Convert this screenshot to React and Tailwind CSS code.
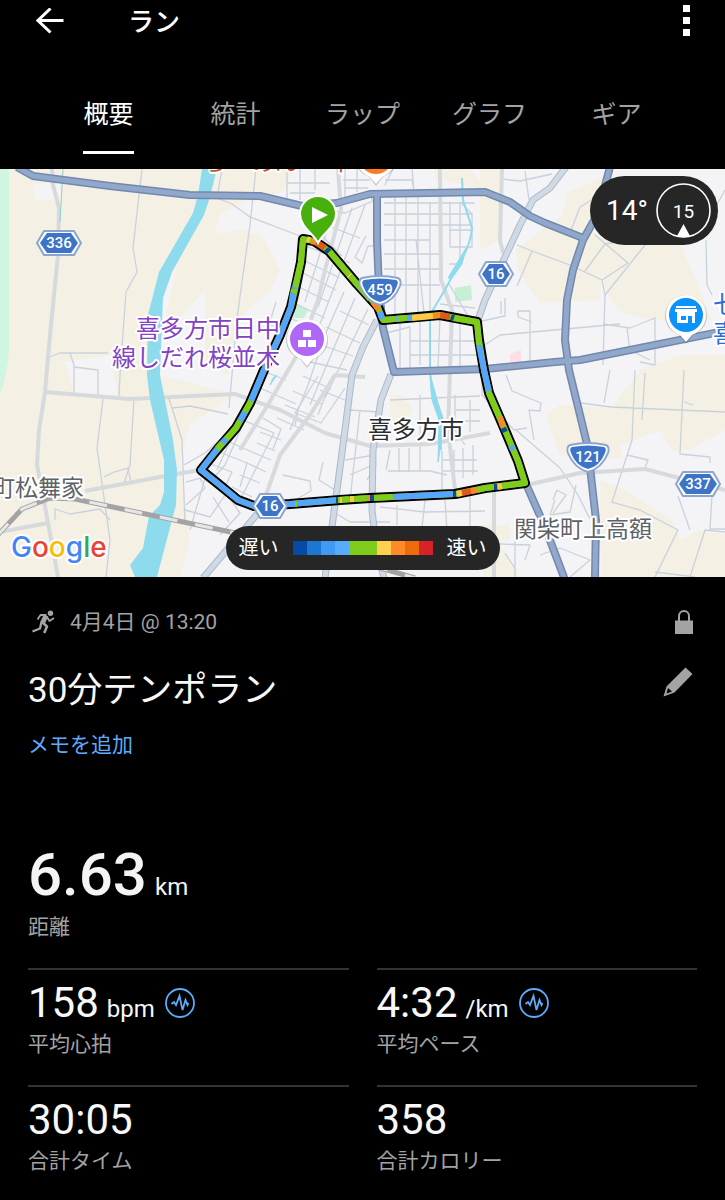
import React, { useState } from 'react';

const TABS = ['概要', '統計', 'ラップ', 'グラフ', 'ギア'];

const STATS = [
  { label: '平均心拍', value: '158', unit: 'bpm', chart: true },
  { label: '平均ペース', value: '4:32', unit: '/km', chart: true },
  { label: '合計タイム', value: '30:05' },
  { label: '合計カロリー', value: '358' },
];

const PACE_COLORS = [
  'bg-[#064ba3]', 'bg-[#1b76d4]', 'bg-[#4199f2]', 'bg-[#58acff]', 'bg-[#80cc1d]',
  'bg-[#80cc1d]', 'bg-[#ffd04f]', 'bg-[#ff8a27]', 'bg-[#ee6a0a]', 'bg-[#d92226]',
];

const GREEN = '#80cc1d';
const BLUE = '#55a6fb';
const NAVY = '#0b4c94';
const YELLOW = '#fcc84a';
const ORANGE = '#f58a2c';
const RED = '#e2571a';

const ROUTE =
  'M303 239 L301 262 L295 290 L291 307 L280 335 L264 370 L250 403 L236 428 L217 450 L201 470 L216 482 L238 500 L254 506 L290 504 L340 500 L370 498 L455 494 L485 488 L525 483 L518 461 L502 423 L489 393 L484 370 L479 340 L477 322 L440 315 L383 320 L378 307 L357 284 L329 251 L314 241 Z';

const ROUTE_SEGMENTS = [
  [GREEN, 'M303 239 L301 262 L295 287'],
  [BLUE, 'M295 287 L294 289'],
  [GREEN, 'M294 289 L293 293'],
  [BLUE, 'M293 293 L291 307 L280 335 L264 370 L251 401'],
  [GREEN, 'M251 401 L245 412'],
  [BLUE, 'M245 412 L240 421'],
  [GREEN, 'M240 421 L236 428 L226 439'],
  [BLUE, 'M226 439 L222 443'],
  [GREEN, 'M222 443 L217 449'],
  [BLUE, 'M217 449 L201 470 L216 482 L238 500 L254 506 L290 504 L338 500'],
  [GREEN, 'M295 504 L297 504'],
  [NAVY, 'M336 500 L338 500'],
  [GREEN, 'M338 500 L349 499'],
  [YELLOW, 'M340 500 L342 500 M350 499 L354 499'],
  [GREEN, 'M354 499 L368 498'],
  [ORANGE, 'M367 498 L370 498'],
  [NAVY, 'M370 498 L374 498'],
  [GREEN, 'M374 498 L393 497'],
  [BLUE, 'M393 497 L453 494'],
  [NAVY, 'M453 494 L456 494'],
  [YELLOW, 'M457 494 L462 493'],
  [RED, 'M462 493 L471 491'],
  [ORANGE, 'M471 491 L477 490'],
  [GREEN, 'M477 490 L485 488 L525 483 L518 461 L502 423 L489 393'],
  [NAVY, 'M494 487 L497 487'],
  [YELLOW, 'M498 487 L502 486'],
  [BLUE, 'M513 450 L511 446'],
  [NAVY, 'M505 432 L503 428'],
  [ORANGE, 'M503 427 L500 417'],
  [BLUE, 'M489 391 L484 370 L479 345'],
  [GREEN, 'M479 345 L477 322 L453 318'],
  [NAVY, 'M454 318 L451 317'],
  [RED, 'M450 317 L440 315'],
  [ORANGE, 'M440 315 L433 316'],
  [YELLOW, 'M433 316 L412 318'],
  [BLUE, 'M412 318 L407 318'],
  [GREEN, 'M406 318 L383 320'],
  [BLUE, 'M396 319 L397 319 M382 319 L380 312'],
  [ORANGE, 'M379 310 L373 302'],
  [GREEN, 'M370 299 L357 284 L330 252'],
  [YELLOW, 'M350 276 L349 275'],
  [NAVY, 'M329 252 L326 249'],
  [RED, 'M325 248 L316 242'],
  [ORANGE, 'M316 242 L311 241'],
  [YELLOW, 'M310 240 L307 239'],
];

const FIELDS = [
  'M9 169 H202 L193 230 L160 300 L155 375 L175 480 L176 577 H0 V395 L9 355 Z',
  'M201 169 H292 L285 190 L245 205 L219 227 L218 220 L205 290 L160 340 V375 L235 395 L190 425 L180 460 L190 540 L180 577 H150 L176 490 L150 380 Z',
  'M205 235 L240 230 L262 235 L280 270 L270 290 L240 318 L228 375 L205 360 Z',
  'M434 169 L435 178 L485 190 L470 169 Z',
  'M480 169 H500 V240 L480 250 Z',
  'M516 250 L562 215 L568 192 L612 174 L592 230 L612 250 L602 275 L600 300 L540 303 L518 270 Z',
  'M600 238 L680 244 L700 290 L712 320 H650 L618 310 L605 290 Z',
  'M546 415 L560 405 L612 408 L640 370 L682 355 H725 V430 L690 450 L600 460 L560 455 Z',
  'M600 480 L665 505 L680 540 L700 530 L725 535 V577 H601 Z',
  'M483 545 H500 L520 577 H483 Z M475 525 H510 V540 H480 Z',
  'M390 395 H402 L413 410 L400 428 L390 420 Z',
];

const TOWNS = [
  'M33 185 L62 180 L58 199 L36 200 Z',
  'M65 362 L110 355 L118 395 L75 394 Z',
  'M220 214 L250 200 V228 L218 226 Z',
  'M702 237 L715 245 L718 285 L700 290 L695 270 Z',
  'M620 445 L660 430 L705 505 L680 525 L625 490 Z',
];

const GREY_ROADS = [
  'M52 169 L53 185 L59 208 L58 255 L50 335 L45 392 L39 430 L37 465 L42 490 L58 577',
  'M45 392 L130 399 L235 394 L280 410 L325 433 L370 446 L430 444 L490 433',
  'M85 491 L160 477 L200 470',
  'M0 532 L48 523',
  'M338 169 L341 210 L325 270 L318 300 L300 350 L266 408 L240 450',
  'M440 169 L441 280 L452 310 L450 370 L448 430 L455 490',
  'M365 377 L335 375 L310 415 L280 455 L266 495',
  'M527 485 L580 473 L645 469 L725 490',
  'M502 169 L500 240 L503 253',
  'M494 490 L494 577',
];

const STREETS = [
  // west of the river
  'M142 169 L133 248 L137 272 L126 292 L120 375 L119 396',
  'M47 358 L60 353 L108 353 M70 353 L74 365 V395 M74 367 L98 370 V395',
  'M103 399 L97 448 L110 540 L106 577 M134 399 L130 465 L124 483',
  'M104 477 L114 472 L128 468 L131 483 M55 520 V509 L70 514 L100 509 L110 520',
  'M222 169 L217 198 L232 204 L250 217 L300 236 M256 169 L250 225 L237 318 L229 408',
  'M168 396 L172 408 L182 440 L185 525 M172 408 L190 406 L228 414',
  'M184 465 L205 453 L225 435 L250 402 M186 482 L200 478 L205 488 L186 505 M185 510 L210 517 L225 495',
  // northern blocks
  'M287 169 V204 M300 169 V200 M315 169 V190 M287 183 H330 M290 193 H315 M345 169 V197 M357 169 V192',
  'M343 180 H370 M345 188 H368 M385 180 H412 L415 196 M393 169 L385 185 M412 169 L414 192',
  'M302 205 L345 213 L373 201 L368 192 M310 219 L360 238 M318 232 L342 256 M303 245 L350 263 M303 260 L340 278',
  'M301 272 L336 290 M297 286 L329 302 M292 302 L325 318 M288 317 L320 332',
  'M365 205 L335 285 L310 350 M352 208 L318 307 M335 205 L305 302 M366 236 L355 257 L362 263 L368 246 H377',
  // centre
  'M344 292 L325 335 L308 385 L290 430 M355 298 L333 350 L310 405 M368 309 L348 350 L325 398',
  'M326 327 L360 343 M318 344 L353 356 M310 362 L347 370 M303 376 L331 389 M293 391 L322 404',
  'M285 405 L315 417 M277 418 L304 430 M340 311 L369 325',
  'M384 203 H475 M384 214 H473 M384 225 H471 M384 240 H430 M384 254 H439 M384 269 H441 M385 285 H440',
  'M395 196 V316 M406 196 V316 M418 196 V316 M430 202 V315 M416 239 L424 313 M440 304 L475 308',
  'M450 202 V247 H472 V214 L460 202 M460 202 V264 M449 230 H473 M449 264 H462 M449 284 L470 319',
  'M386 333 L410 327 V370 M400 322 V370 M420 320 V365 M440 318 L438 368 M460 320 V370 M410 341 H475 M410 355 H478',
  // western town
  'M276 302 L269 325 L279 326 L271 348 M261 326 L283 337 M268 373 L286 380 M260 388 L296 404',
  'M245 421 L274 433 L240 500 M263 418 L281 429 L273 449 M260 432 L281 440 M257 443 L275 451 M252 452 L271 460',
  'M247 463 L266 472 M240 475 L260 483 M232 487 L252 497 M217 451 L247 463 L240 487 M225 440 L252 452 M208 463 L232 472 L225 487',
  'M240 431 L225 465 L210 482 M230 441 L217 470 M206 475 L190 530 M220 485 L240 513 L220 535 M213 497 L229 522',
  'M318 376 L295 413 L321 423 L345 388 M333 375 L318 415 M320 390 L345 400 M298 412 L295 425',
  'M283 475 L310 481 L311 491 L295 500 M323 462 L319 480 L335 490 M360 410 L350 500 M350 410 L380 412 M370 420 L376 465 L367 480',
  'M345 460 L375 455 M350 475 L373 465 M390 400 L480 396 M420 395 V470 M455 395 V430 L465 445 M470 400 V432 M456 410 H480 M457 421 H480',
  'M388 471 H430 L447 475 M390 450 L386 470 M399 448 V472 M409 448 V472 M442 451 V495 M454 450 V480 M463 448 V478 M473 445 V475 M443 460 H477 M443 471 H478',
  'M380 507 L425 512 L485 511 M397 505 V525 M425 500 L422 528 M445 500 L447 530 M470 495 V530 M330 510 L350 522 H390',
  // east
  'M501 179 L520 181 L552 174 M525 171 L529 200 M517 245 L532 251 L517 286 M532 251 L570 265 L602 280 L605 295 L603 365',
  'M602 280 L628 263 L595 235 M605 295 L645 245 M585 271 L605 244 L630 240 M570 233 L580 207 L595 198',
  'M482 321 L505 316 V298 M501 301 V314 M518 317 V311 H530 V368 M518 317 L532 322 M483 346 L500 335 L620 324 M603 324 L630 328 L655 318 V365 L640 362',
  'M627 328 L630 350 L650 360 M645 373 L642 420 M482 370 V395 L514 430 L527 428 M506 375 L512 391 L541 403 L540 411 L529 410 L534 440',
  'M581 403 L611 407 L725 412 M610 370 L604 403 M635 370 L632 440 L612 502 L640 510 L678 530 L655 577',
  'M684 370 L680 454 L710 457 V463 M684 402 L693 405 M627 455 L648 460 L645 468 M678 496 L690 530 M712 495 L710 529 H725',
  'M516 430 L560 468 L578 495 L590 519 M553 500 L557 490 L566 495 L553 513 M576 485 L570 512 L550 515 L555 500',
  'M706 240 L707 285 L712 295 M700 220 L714 210 L725 190 M725 532 L705 530 L690 577 M655 572 L695 577',
  'M505 553 L516 570 M500 544 L530 545 L525 560 M540 555 L560 548 L590 560 L570 577 M515 535 V577',
];

const MAJOR_ROADS = [
  'M17 167 L33 176 L110 186 L190 195 L260 196 L302 206 L337 203 L370 194 L485 192 L510 202 L530 216 L545 223 L583 238',
  'M377 194 V240 L379 290 L383 328 L394 372 L485 369 L555 362 L580 360 L640 348 L725 331',
  'M610 167 L597 215 L583 240 L573 270 L567 300 L565 340 L569 370 L580 415 L588 448 L592 485 L596 520 L595 578',
  'M526 484 L545 527 L565 580',
];

const SECONDARY_ROADS = [
  'M566 167 L550 188 L533 200 L520 225 L485 300 L478 320',
  'M377 320 L363 347 L352 375 L345 430 L337 490 L325 578',
  'M391 374 L381 400 L373 450 L372 510 L376 545 L384 578',
  'M264 506 L203 578',
];

const RAIL = 'M-4 537 L22 509 L50 498 L75 499 L240 534 L310 548 L415 578';

function RoadHex({ x, y, label }) {
  const w = label.length > 2 ? 22 : 17;
  const hex = (dx, h) =>
    `M${x - w - dx} ${y} L${x - w + 7 - dx} ${y - h} H${x + w - 7 + dx} L${x + w + dx} ${y} L${x + w - 7 + dx} ${y + h} H${x - w + 7 - dx} Z`;
  return (
    <g strokeLinejoin="round">
      <path d={hex(0, 12)} fill="#fff" stroke="#8ba5cc" strokeWidth="2" />
      <path d={hex(-3, 10)} fill="#3d74c7" />
      <text x={x} y={y + 5} textAnchor="middle" fontSize="15" fontWeight="500" fill="#fff">{label}</text>
    </g>
  );
}

function RouteShield({ x, y, label }) {
  return (
    <g transform={`translate(${x} ${y})`} strokeLinejoin="round">
      <path d="M-18 -12 Q0 -16 18 -12 Q22 -10 20 -4 Q14 11 0 15 Q-14 11 -20 -4 Q-22 -10 -18 -12 Z" fill="#fff" stroke="#8ba5cc" strokeWidth="2" />
      <path d="M-16 -10 Q0 -13 16 -10 Q19 -9 17 -4 Q12 9 0 12 Q-12 9 -17 -4 Q-19 -9 -16 -10 Z" fill="#3d74c7" />
      <text x="0" y="5" textAnchor="middle" fontSize="15" fontWeight="500" fill="#fff">{label}</text>
    </g>
  );
}

function Pin({ x, y, color, children }) {
  return (
    <g transform={`translate(${x} ${y})`}>
      <path d="M0 29 L-7 20 C-15 17 -21 10 -21 1 A21 21 0 0 1 21 1 C21 10 15 17 7 20 Z" fill="#00000030" />
      <path d="M0 27 L-6 20 C-14 17 -20 9 -20 0 A20 20 0 0 1 20 0 C20 9 14 17 6 20 Z" fill="#fff" />
      <circle r="17" fill={color} />
      {children}
    </g>
  );
}

function RouteMap() {
  return (
    <svg viewBox="0 169 725 408" className="block w-full font-[Roboto,'Noto_Sans_CJK_JP',sans-serif]" role="img" aria-label="喜多方市">
      <rect y="169" width="725" height="408" fill="#f4f3f6" />
      {FIELDS.map((d) => <path key={d} d={d} fill="#f4f0e4" />)}
      {TOWNS.map((d) => <path key={d} d={d} fill="#f4f3f6" />)}
      <path d="M0 169 H9 V350 Q8 372 0 395 Z" fill="#d0f5e1" />
      <path d="M455 288 L471 285 L472 300 L455 302 Z M296 303 L308 310 L304 318 L293 318 Z" fill="#c6f0d5" />
      <path d="M510 354 L521 350 L521 362 H510 Z" fill="#fde0e3" />

      <g fill="none" strokeLinejoin="round">
        {STREETS.map((d) => <path key={d} d={d} stroke="#c9d2dc" strokeWidth="1.3" />)}
        {GREY_ROADS.map((d) => <path key={d} d={d} stroke="#d7dadd" strokeWidth="4" />)}
        <path d="M63 169 L60 222" stroke="#8bd0dc" strokeWidth="1" />
      </g>

      <path d="M202 169 L198 195 L193 213 L159 272 L148 315 L147 375 L150 400 L164 460 V492 L160 505 L149 516 L143 548 L130 565 L135 577 H157 L176 505 L177 470 L173 440 L160 375 L163 298 L172 272 L204 215 L209 200 L217 169 Z" fill="#8fdbee" />
      <path d="M462 178 L463 200 L472 228 Q470 248 457 267 L446 288 L430 315 V370 L432 395 L439 412 L441 450" fill="none" stroke="#8fdbee" strokeWidth="2" />
      <path d="M466 248 L448 278 L452 278 L462 264 Z M430 374 L438 403 L443 418 L441 445 L438 462 L439 420 L432 400 Z M270 385 L277 375 L273 378 Z" fill="#8fdbee" stroke="#8fdbee" />

      <g fill="none" strokeLinejoin="round">
        {SECONDARY_ROADS.map((d) => <path key={d} d={d} stroke="#abb9ca" strokeWidth="7" />)}
        {SECONDARY_ROADS.map((d) => <path key={d} d={d} stroke="#cfdae4" strokeWidth="5" />)}
        {MAJOR_ROADS.map((d) => <path key={d} d={d} stroke="#7189ae" strokeWidth="8" />)}
        {MAJOR_ROADS.map((d) => <path key={d} d={d} stroke="#92a8ca" strokeWidth="5" />)}
        <path d={RAIL} stroke="#a3a3a3" strokeWidth="5" />
        <path d={RAIL} stroke="#e6e6e6" strokeWidth="3" strokeDasharray="18 18" />
        <path d={ROUTE} stroke="#000" strokeWidth="10" />
        <path d={ROUTE} stroke={GREEN} strokeWidth="6" />
        {ROUTE_SEGMENTS.map(([color, d]) => <path key={d} d={d} stroke={color} strokeWidth="6" />)}
      </g>

      <RoadHex x={59} y={243} label="336" />
      <RoadHex x={496} y={274} label="16" />
      <RoadHex x={270} y={506} label="16" />
      <RoadHex x={698} y={484} label="337" />
      <RouteShield x={380} y={290} label="459" />
      <RouteShield x={588} y={457} label="121" />

      <g stroke="#fff" strokeWidth="4" strokeLinejoin="round" paintOrder="stroke">
        <text x="203" y="170" fontSize="24" fill="#c2551d">らーめん 一平</text>
        <g fontSize="24" fill="#8443c4" textAnchor="end">
          <text x="280" y="337">喜多方市日中</text>
          <text x="280" y="366">線しだれ桜並木</text>
        </g>
        <text x="368" y="438" fontSize="24" fill="#2a2c30">喜多方市</text>
        <g fontSize="23" fill="#5d6266">
          <text x="-8" y="496">町松舞家</text>
          <text x="514" y="537">関柴町上高額</text>
        </g>
        <g fontSize="24" fill="#2a6fd8">
          <text x="713" y="313">七</text>
          <text x="713" y="342">喜</text>
        </g>
        <text x="11" y="557" fontSize="28" fontWeight="500" className="font-[Inter,sans-serif]">
          <tspan fill="#4285f4">G</tspan>
          <tspan fill="#ea4335">o</tspan>
          <tspan fill="#fbbc05">o</tspan>
          <tspan fill="#4285f4">g</tspan>
          <tspan fill="#34a853">l</tspan>
          <tspan fill="#ea4335">e</tspan>
        </text>
      </g>

      <Pin x={376} y={157} color="#fb7b22" />
      <Pin x={307} y={339} color="#b067f5">
        <path d="M-4 -9 H4 V-2 H-4 Z M-9 1 H-1 V8 H-9 Z M1 1 H9 V8 H1 Z" fill="#fff" />
      </Pin>
      <Pin x={686} y={315} color="#0a94fb">
        <path d="M-10 -9 H10 V-7 H-10 Z M-11 -6 H11 V-3 H-11 Z M-9 -3 H9 V8 H6 V1 H2 V8 H-9 Z M-5 1 V5 H0 V1 Z" fill="#fff" fillRule="evenodd" />
      </Pin>
      <path d="M318 243 C314 234 300 227 300 214 A18 18 0 0 1 336 214 C336 227 322 234 318 243 Z" fill="#47b00c" stroke="#fff" strokeWidth="2" />
      <path d="M312 207 L328 215 L312 223 Z" fill="#fff" />
    </svg>
  );
}

function WeatherBadge() {
  return (
    <div className="absolute top-[7px] right-[7px] flex items-center gap-2 rounded-full bg-[#262626] py-[7px] pr-[7px] pl-4 text-white">
      <span className="text-[28px] leading-9">14°</span>
      <svg viewBox="0 0 55 55" className="h-[55px] w-[55px]">
        <circle cx="27.5" cy="27.5" r="26.5" fill="none" stroke="#fff" strokeWidth="1.6" />
        <text x="27.5" y="34.5" textAnchor="middle" fontSize="19" fill="#fff">15</text>
        <path d="M27.5 41 L34 53 Q27.5 55.5 21 53 Z" fill="#fff" />
      </svg>
    </div>
  );
}

function PaceLegend() {
  return (
    <div className="absolute inset-x-0 bottom-[7px] flex justify-center">
      <div className="flex items-center gap-3.5 rounded-full bg-[#262626] px-[13px] py-2 text-xl leading-7 text-white">
        <span>遅い</span>
        <div className="flex">
          {PACE_COLORS.map((c, i) => <span key={i} className={`h-3.5 w-3.5 ${c}`} />)}
        </div>
        <span>速い</span>
      </div>
    </div>
  );
}

function RunIcon() {
  return (
    <svg viewBox="0 0 24 26" className="h-[26px] w-6 text-[#a3a3a3]" fill="none" stroke="currentColor" strokeLinejoin="round">
      <circle cx="18.5" cy="4.2" r="2.7" fill="currentColor" stroke="none" />
      <path d="M5.5 10.5 L8.5 6 L14.5 6" strokeWidth="1.8" />
      <path d="M14 6.5 L10.5 14" strokeWidth="5" />
      <path d="M15 8 L17.5 12 L22 9" strokeWidth="1.8" />
      <path d="M10.5 13.5 L15 17.5 L12.2 24" strokeWidth="2.6" />
      <path d="M9.5 13 L8 19.5 L0.5 22.5" strokeWidth="2.3" />
    </svg>
  );
}

function ChartIcon() {
  return (
    <svg viewBox="0 0 30 30" className="h-[30px] w-[30px]" fill="none" stroke="#5dabfa" strokeWidth="1.8">
      <circle cx="15" cy="15" r="14" />
      <path d="M6.5 16 L9 14 L11 17 L14.5 8 L17.5 22 L20.5 12 L22.5 17 L23.5 15" />
    </svg>
  );
}

function Stat({ label, value, unit, chart }) {
  return (
    <div className="border-t-2 border-[#333] pt-[9px] pb-[27px]">
      <div className="flex items-center gap-2.5">
        <p className="text-[42px] leading-12 text-[#f8f8f8]">
          {value}
          {unit && <span className="ml-2 text-2xl leading-6">{unit}</span>}
        </p>
        {chart && (
          <button aria-label={`${label} グラフ`}>
            <ChartIcon />
          </button>
        )}
      </div>
      <p className="mt-[3px] text-[21px] leading-7 text-[#a3a3a3]">{label}</p>
    </div>
  );
}

export default function App() {
  const [tab, setTab] = useState('概要');

  return (
    <div lang="ja" className="min-h-screen bg-black font-[Roboto,'Noto_Sans_CJK_JP',sans-serif] text-white">
      <header className="flex h-11 items-center pr-[35px] pl-9">
        <button aria-label="戻る">
          <svg viewBox="0 0 28 28" className="h-7 w-7" fill="none" stroke="#fff" strokeWidth="3">
            <path d="M14.5 0.5 L2 12.5 L14.5 24.5 M2 12.5 H27.5" />
          </svg>
        </button>
        <h1 className="ml-16 text-[26px] leading-8 font-medium">ラン</h1>
        <button aria-label="メニュー" className="ml-auto">
          <svg viewBox="0 0 7 34" className="h-[34px] w-[7px]" fill="#fff">
            <path d="M0 0 H7 V7 H0 Z M0 12 H7 V19 H0 Z M0 24 H7 V31 H0 Z" />
          </svg>
        </button>
      </header>

      <nav className="grid grid-cols-5 px-[45px] pt-[53px] pb-[15px]">
        {TABS.map((t) => (
          <button
            key={t}
            onClick={() => setTab(t)}
            className={`justify-self-center border-b-3 pb-[18px] text-[25px] leading-9 ${t === tab ? 'border-white text-white' : 'border-transparent text-[#a3a3a3]'}`}
          >
            {t}
          </button>
        ))}
      </nav>

      <section className="relative">
        <RouteMap />
        <WeatherBadge />
        <PaceLegend />
      </section>

      <main className="px-7 pt-[31px]">
        <div className="flex items-center text-[#a3a3a3]">
          <span className="ml-1"><RunIcon /></span>
          <p className="ml-3.5 text-[21px] leading-7">4月4日 @ 13:20</p>
          <svg viewBox="0 0 18 24" className="mr-1 ml-auto h-6 w-[18px]" role="img" aria-label="非公開">
            <path d="M4 11 V6 A5 5 0 0 1 14 6 V11" fill="none" stroke="currentColor" strokeWidth="2" />
            <path d="M0 10.5 H18 V24 H0 Z" fill="currentColor" />
          </svg>
        </div>

        <div className="mt-[31px] flex justify-between">
          <h2 className="text-[35px] leading-12 text-[#f8f8f8]">30分テンポラン</h2>
          <button aria-label="編集" className="mr-1 self-start">
            <svg viewBox="0 0 30 30" className="h-[30px] w-[30px]" fill="#a3a3a3">
              <path fillRule="evenodd" d="M22.5 0.5 L29.5 7 L11.5 25.5 L0.5 29.5 L3.5 19.5 Z M5 21 L3.5 26.5 L9 24.6 Z" />
            </svg>
          </button>
        </div>
        <a href="#memo" className="mt-4 block w-fit text-[21px] leading-7 text-[#5dabfa]">メモを追加</a>

        <div className="mt-21 pb-[27px]">
          <p className="text-[60px] leading-16 font-medium text-[#f4f4f4]">
            6.63
            <span className="ml-2 text-2xl leading-6 font-normal">km</span>
          </p>
          <p className="mt-1.5 text-[21px] leading-7 text-[#a3a3a3]">距離</p>
        </div>

        <div className="grid grid-cols-2 gap-x-7">
          {STATS.map((s) => <Stat key={s.label} {...s} />)}
        </div>
      </main>
    </div>
  );
}
